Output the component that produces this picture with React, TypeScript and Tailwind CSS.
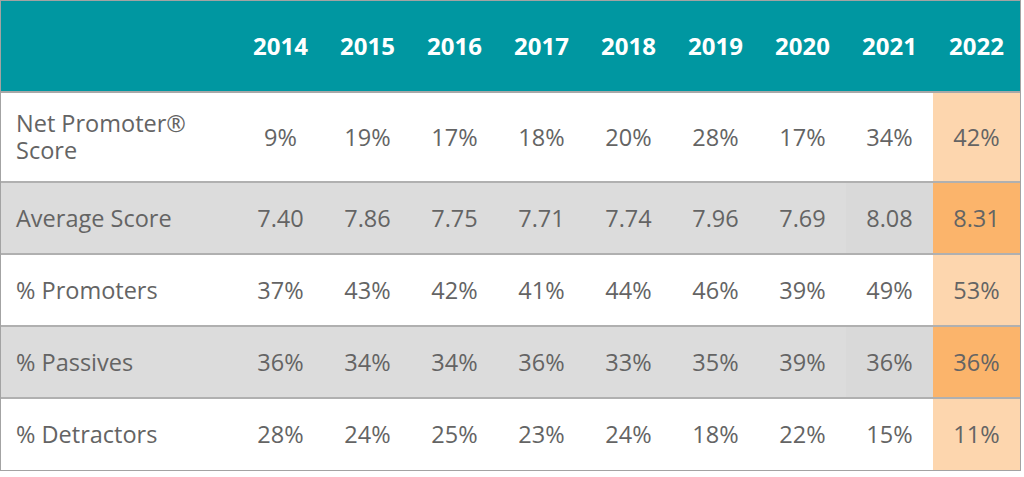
import React from "react";

const years = ["2014", "2015", "2016", "2017", "2018", "2019", "2020", "2021", "2022"];

const rows: { label: React.ReactNode; values: string[]; gray: boolean; h: string }[] = [
  {
    label: (
      <>
        Net Promoter®
        <br />
        Score
      </>
    ),
    values: ["9%", "19%", "17%", "18%", "20%", "28%", "17%", "34%", "42%"],
    gray: false,
    h: "h-[90px]",
  },
  { label: "Average Score", values: ["7.40", "7.86", "7.75", "7.71", "7.74", "7.96", "7.69", "8.08", "8.31"], gray: true, h: "h-[72px]" },
  { label: "% Promoters", values: ["37%", "43%", "42%", "41%", "44%", "46%", "39%", "49%", "53%"], gray: false, h: "h-[72px]" },
  { label: "% Passives", values: ["36%", "34%", "34%", "36%", "33%", "35%", "39%", "36%", "36%"], gray: true, h: "h-[72px]" },
  { label: "% Detractors", values: ["28%", "24%", "25%", "23%", "24%", "18%", "22%", "15%", "11%"], gray: false, h: "h-[71px]" },
];

export default function App() {
  return (
    <div className="w-[1024px] h-[477px] bg-white" style={{ fontFamily: "'Open Sans', sans-serif" }}>
      <div className="w-[1021px] border border-[#a3a3a3]">
        <div className="grid grid-cols-[236px_repeat(9,87px)] h-[92px] bg-[#0097a1] border-b-2 border-[#a8a8a8] items-center">
          <div />
          {years.map((y) => (
            <div key={y} className="text-center text-white font-bold text-[24px]">
              {y}
            </div>
          ))}
        </div>
        {rows.map((r, i) => (
          <div
            key={i}
            className={`grid grid-cols-[236px_repeat(9,87px)] ${r.h} ${
              i < rows.length - 1 ? "border-b-2 border-[#b0b0b0]" : ""
            } ${r.gray ? "bg-[#dcdcdc]" : "bg-white"} text-[#646464] text-[23.5px] leading-[27px]`}
          >
            <div className="flex items-center pl-[15px]">{r.label}</div>
            {r.values.map((v, j) => (
              <div
                key={j}
                className={`flex items-center justify-center ${
                  j === 8 ? (r.gray ? "bg-[#fbb46b]" : "bg-[#fdd6ae]") : j === 7 && r.gray ? "bg-[#d9d9d9]" : ""
                }`}
              >
                {v}
              </div>
            ))}
          </div>
        ))}
      </div>
    </div>
  );
}
